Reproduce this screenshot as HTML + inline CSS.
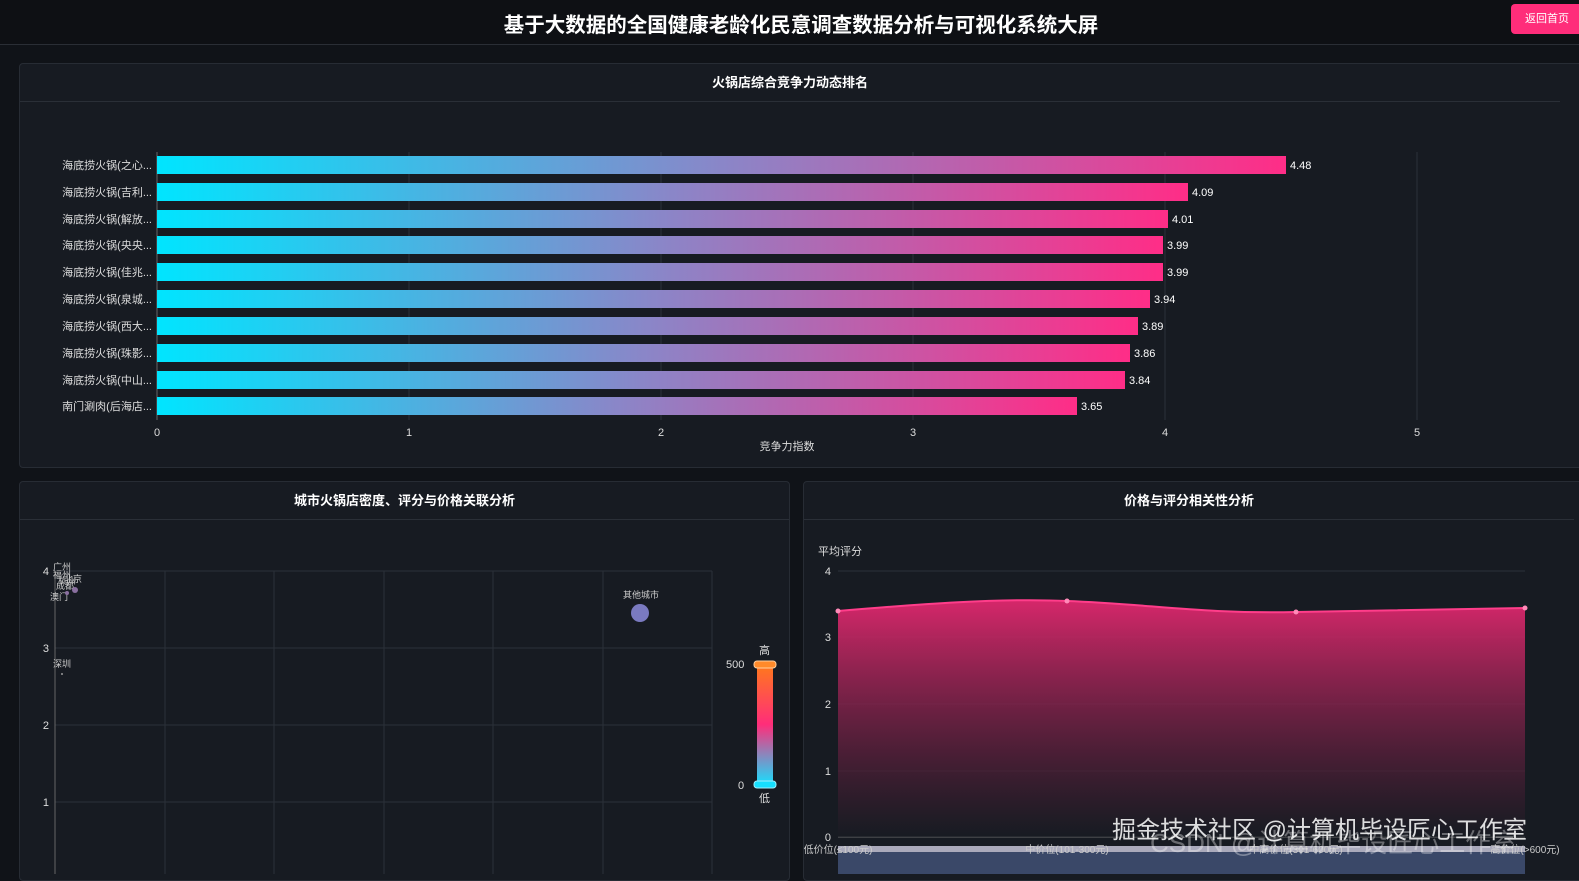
<!DOCTYPE html>
<html><head><meta charset="utf-8"><style>
*{margin:0;padding:0;box-sizing:border-box}
body{width:1579px;height:874px;overflow:hidden;background:#101318;font-family:"Liberation Sans","Noto Sans CJK SC",sans-serif;color:#fff;position:relative}
.hdr{position:absolute;left:0;top:0;width:1579px;height:45px;background:#0e1014;border-bottom:1px solid #2a2e35}
.hdr h1{position:absolute;left:0;width:1602px;text-align:center;top:8px;font-size:20.5px;font-weight:bold}
.btn{position:absolute;left:1511px;top:4px;width:80px;height:30px;background:#ff2d7a;border-radius:4px;font-size:11px;line-height:30px;padding-left:14px}
.pn{position:absolute;background:#171b22;border:1px solid #272c34;border-radius:4px}
.pt{height:38px;border-bottom:1px solid #2a2f37;text-align:center;font-size:13px;font-weight:bold;line-height:38px}
svg text{font-family:"Liberation Sans","Noto Sans CJK SC",sans-serif}
</style></head><body>
<div class="hdr"><h1>基于大数据的全国健康老龄化民意调查数据分析与可视化系统大屏</h1><div class="btn">返回首页</div></div>
<div class="pn" style="left:19px;top:63px;width:1570px;height:405px"><div class="pt" style="width:1540px">火锅店综合竞争力动态排名</div></div>
<div class="pn" style="left:19px;top:481px;width:771px;height:400px"><div class="pt">城市火锅店密度、评分与价格关联分析</div></div>
<div class="pn" style="left:803px;top:481px;width:790px;height:400px"><div class="pt" style="width:770px">价格与评分相关性分析</div></div>
<svg width="1579" height="874" style="position:absolute;left:0;top:0">
<defs>
<linearGradient id="bg" x1="0" x2="1"><stop offset="0" stop-color="#00e5ff"/><stop offset="0.5" stop-color="#8a86c8"/><stop offset="1" stop-color="#ff2d87"/></linearGradient>
<linearGradient id="vm" x1="0" y1="0" x2="0" y2="1"><stop offset="0" stop-color="#ff7a1a"/><stop offset="0.5" stop-color="#ff2d7a"/><stop offset="1" stop-color="#16e0ff"/></linearGradient>
<linearGradient id="ar" x1="0" y1="0" x2="0" y2="1"><stop offset="0" stop-color="#e0286e" stop-opacity="0.95"/><stop offset="1" stop-color="#171b22" stop-opacity="0.6"/></linearGradient>
</defs>
<g stroke="#2b3039" stroke-width="1">
<line x1="409" y1="152" x2="409" y2="420"/><line x1="661" y1="152" x2="661" y2="420"/><line x1="913" y1="152" x2="913" y2="420"/><line x1="1165" y1="152" x2="1165" y2="420"/><line x1="1417" y1="152" x2="1417" y2="420"/>
</g>
<line x1="157" y1="152" x2="157" y2="420" stroke="#666"/>
<g fill="url(#bg)">
<rect x="157" y="156" width="1129" height="18"/><rect x="157" y="183" width="1031" height="18"/><rect x="157" y="210" width="1011" height="18"/><rect x="157" y="236" width="1006" height="18"/><rect x="157" y="263" width="1006" height="18"/><rect x="157" y="290" width="993" height="18"/><rect x="157" y="317" width="981" height="18"/><rect x="157" y="344" width="973" height="18"/><rect x="157" y="371" width="968" height="18"/><rect x="157" y="397" width="920" height="18"/>
</g>
<g fill="#fff" font-size="11">
<text x="1290" y="169">4.48</text><text x="1192" y="196">4.09</text><text x="1172" y="223">4.01</text><text x="1167" y="249">3.99</text><text x="1167" y="276">3.99</text><text x="1154" y="303">3.94</text><text x="1142" y="330">3.89</text><text x="1134" y="357">3.86</text><text x="1129" y="384">3.84</text><text x="1081" y="410">3.65</text>
</g>
<g fill="#ddd" font-size="11" text-anchor="end">
<text x="152" y="169">海底捞火锅(之心...</text><text x="152" y="196">海底捞火锅(吉利...</text><text x="152" y="223">海底捞火锅(解放...</text><text x="152" y="249">海底捞火锅(央央...</text><text x="152" y="276">海底捞火锅(佳兆...</text><text x="152" y="303">海底捞火锅(泉城...</text><text x="152" y="330">海底捞火锅(西大...</text><text x="152" y="357">海底捞火锅(珠影...</text><text x="152" y="384">海底捞火锅(中山...</text><text x="152" y="410">南门涮肉(后海店...</text>
</g>
<g fill="#ddd" font-size="11" text-anchor="middle">
<text x="157" y="436">0</text><text x="409" y="436">1</text><text x="661" y="436">2</text><text x="913" y="436">3</text><text x="1165" y="436">4</text><text x="1417" y="436">5</text><text x="787" y="450">竞争力指数</text>
</g>
<g stroke="#2b3039">
<line x1="55" y1="571" x2="712" y2="571"/><line x1="55" y1="648" x2="712" y2="648"/><line x1="55" y1="725" x2="712" y2="725"/><line x1="55" y1="802" x2="712" y2="802"/>
<line x1="165" y1="571" x2="165" y2="874"/><line x1="274" y1="571" x2="274" y2="874"/><line x1="384" y1="571" x2="384" y2="874"/><line x1="493" y1="571" x2="493" y2="874"/><line x1="603" y1="571" x2="603" y2="874"/><line x1="712" y1="571" x2="712" y2="874"/>
</g>
<line x1="55" y1="571" x2="55" y2="874" stroke="#666"/>
<g fill="#ddd" font-size="11" text-anchor="end"><text x="49" y="575">4</text><text x="49" y="652">3</text><text x="49" y="729">2</text><text x="49" y="806">1</text></g>
<g fill="#ccc" font-size="9"><text x="53" y="570">广州</text><text x="53" y="578">福州</text><text x="58" y="584">杭州</text><text x="64" y="582">北京</text><text x="56" y="589">成都</text><text x="50" y="600">澳门</text><text x="53" y="667">深圳</text><text x="623" y="598">其他城市</text></g>
<circle cx="75" cy="590" r="3" fill="#8a6fa0"/><circle cx="67" cy="593" r="2" fill="#8a6fa0"/><circle cx="62" cy="674" r="1" fill="#999"/>
<circle cx="640" cy="613" r="9" fill="#7a7ac0"/>
<rect x="757" y="664" width="16" height="121" rx="3" fill="url(#vm)"/>
<rect x="754" y="661" width="22" height="7" rx="3" fill="#ff8a2a" stroke="#ffd0a0"/>
<rect x="754" y="781" width="22" height="7" rx="3" fill="#16e0ff" stroke="#a0f0ff"/>
<g fill="#ddd" font-size="11"><text x="759" y="654">高</text><text x="759" y="802">低</text><text x="726" y="668">500</text><text x="738" y="789">0</text></g>
<g stroke="#2b3039"><line x1="838" y1="571" x2="1525" y2="571"/><line x1="838" y1="637" x2="1525" y2="637"/><line x1="838" y1="704" x2="1525" y2="704"/><line x1="838" y1="771" x2="1525" y2="771"/></g>
<line x1="838" y1="837" x2="1525" y2="837" stroke="#666"/>
<path d="M838 611 C920 604 1000 598 1067 601 C1150 604 1200 614 1296 612 C1400 610 1470 609 1525 608 L1525 837 L838 837Z" fill="url(#ar)"/>
<path d="M838 611 C920 604 1000 598 1067 601 C1150 604 1200 614 1296 612 C1400 610 1470 609 1525 608" fill="none" stroke="#ff3d8a" stroke-width="2"/>
<g fill="#ff8ab8"><circle cx="838" cy="611" r="2.5"/><circle cx="1067" cy="601" r="2.5"/><circle cx="1296" cy="612" r="2.5"/><circle cx="1525" cy="608" r="2.5"/></g>
<g fill="#ddd" font-size="11" text-anchor="end"><text x="831" y="575">4</text><text x="831" y="641">3</text><text x="831" y="708">2</text><text x="831" y="775">1</text><text x="831" y="841">0</text></g>
<text x="818" y="555" fill="#ddd" font-size="11">平均评分</text>
<rect x="838" y="846" width="687" height="6" fill="#aab"/>
<rect x="838" y="852" width="687" height="22" fill="#3a4868"/>
<g fill="#ccc" font-size="10" text-anchor="middle"><text x="838" y="853">低价位(≤100元)</text><text x="1067" y="853">中价位(101-300元)</text><text x="1296" y="853">中高价位(301-600元)</text><text x="1525" y="853">高价位(&gt;600元)</text></g>
<text x="1112" y="838" fill="#fff" fill-opacity="0.85" font-size="24">掘金技术社区 @计算机毕设匠心工作室</text>
<text x="1150" y="852" fill="#fff" fill-opacity="0.35" font-size="26">CSDN @计算机毕设匠心工作室</text>
</svg>
</body></html>
